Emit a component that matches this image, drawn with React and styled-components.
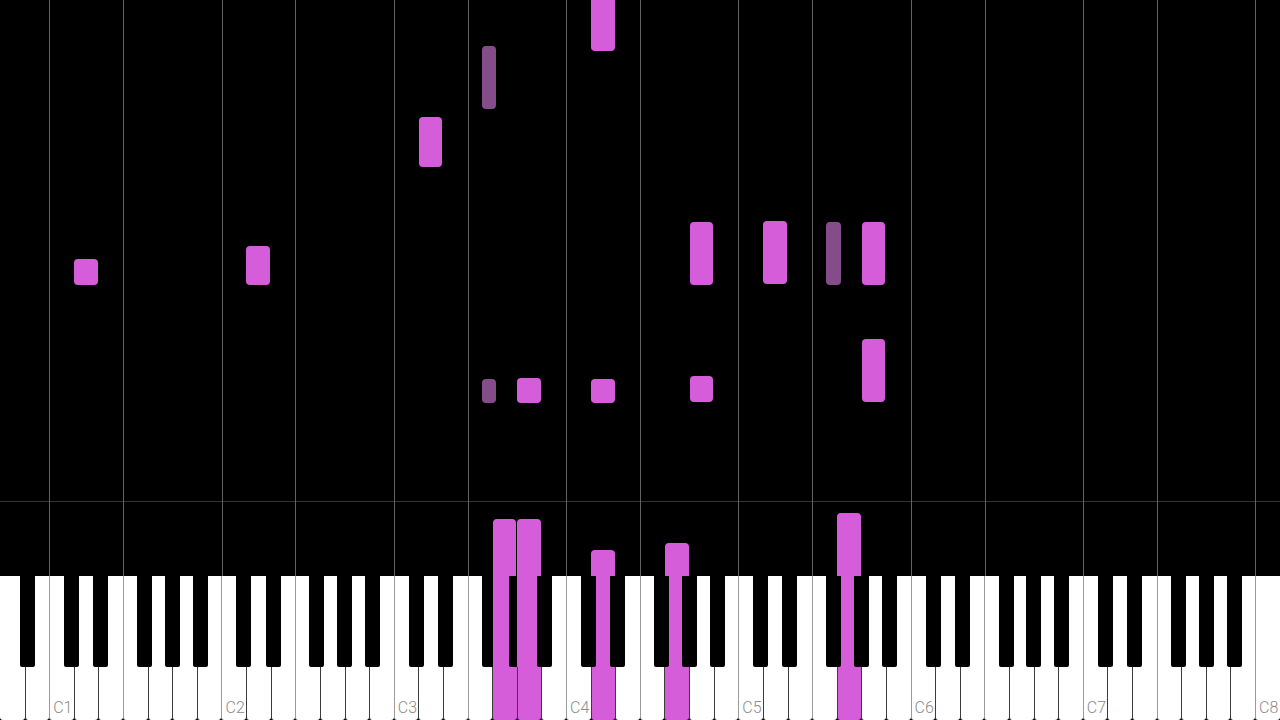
import React from 'react';
import styled, { createGlobalStyle } from 'styled-components';

// Keyboard geometry: a full 88-key piano, A0..C8, 52 naturals across the stage.
const STAGE_W = 1280;
const WHITE_COUNT = 52;
const WHITE_W = STAGE_W / WHITE_COUNT;
const OCTAVE_W = WHITE_W * 7;
const BLACK_W = 15;
const BLACK_H = 91;
const KEYBOARD_H = 144;
const BAR_LINE_Y = 501;

const NATURAL_STEP = { C: 0, D: 1, E: 2, F: 3, G: 4, A: 5, B: 6 };
// Left edge of each sharp inside an octave, measured on a 172.3px octave.
const SHARP_OFFSET = { C: 14.8, D: 44.0, F: 87.8, G: 115.6, A: 143.5 };
const NEXT_SHARP = { C: 'C', D: 'D', E: 'F', F: 'F', G: 'G', A: 'A', B: 'C' };

const NOTE = '#d65dda';
const NOTE_DIM = '#844d89';

const octaveLeft = (oct) => (2 + 7 * (oct - 1)) * WHITE_W;

function keySpan(name) {
  const [, letter, sharp, o] = name.match(/^([A-G])(#?)(\d)$/);
  const oct = Number(o);
  if (sharp) {
    return {
      left: octaveLeft(oct) + (SHARP_OFFSET[letter] * OCTAVE_W) / 172.31,
      width: BLACK_W,
      sharp: true,
    };
  }
  return { left: octaveLeft(oct) + NATURAL_STEP[letter] * WHITE_W, width: WHITE_W, sharp: false };
}

const WHITE_KEYS = Array.from({ length: WHITE_COUNT }, (_, i) => {
  const letter = 'CDEFGAB'[(i + 5) % 7];
  const octave = i < 2 ? 0 : Math.floor((i - 2) / 7) + 1;
  return { letter, octave, name: `${letter}${octave}`, index: i };
});

const BLACK_KEYS = [];
for (let oct = 0; oct <= 7; oct += 1) {
  ['C', 'D', 'F', 'G', 'A'].forEach((l) => {
    const span = keySpan(`${l}#${oct}`);
    if (span.left >= 0 && span.left + BLACK_W <= STAGE_W) BLACK_KEYS.push({ name: `${l}#${oct}`, left: span.left });
  });
}

// Grid bands between the C and F lines, in naturals.
const GRID_BANDS = [2, ...Array.from({ length: 7 }, () => [3, 4]).flat(), 1];

// Falling notes: key, top and bottom on the roll (px).
const FALLING = [
  { key: 'D4', top: -12, bottom: 51.3 },
  { key: 'F#3', top: 45.5, bottom: 108.7 },
  { key: 'D3', top: 116.7, bottom: 167 },
  { key: 'D5', top: 220.7, bottom: 284.3 },
  { key: 'A4', top: 221.7, bottom: 284.7 },
  { key: 'F#5', top: 221.7, bottom: 285 },
  { key: 'A5', top: 221.7, bottom: 285 },
  { key: 'D2', top: 246, bottom: 284.5 },
  { key: 'D1', top: 259, bottom: 284.5 },
  { key: 'A5', top: 339, bottom: 402.3 },
  { key: 'A4', top: 376, bottom: 402.3 },
  { key: 'A3', top: 378.3, bottom: 403 },
  { key: 'D4', top: 378.7, bottom: 403 },
  { key: 'F#3', top: 379, bottom: 402.7 },
];

// Notes currently sounding: they run down into the keys.
const SOUNDING = [
  { key: 'G5', top: 512.7 },
  { key: 'G3', top: 519 },
  { key: 'A3', top: 519 },
  { key: 'G4', top: 543 },
  { key: 'D4', top: 550 },
];
const PRESSED = new Set(SOUNDING.map((n) => n.key));
// Freshly struck keys whose bar still crosses the sharp on their left.
const STRUCK = ['G3', 'A3'];

const GlobalStyle = createGlobalStyle`
  html, body {
    margin: 0;
    padding: 0;
    background: #000;
    overflow: hidden;
  }
  #root {
    width: ${STAGE_W}px;
    height: 720px;
  }
`;

const Stage = styled.div`
  width: ${STAGE_W}px;
  height: 720px;
  display: flex;
  flex-direction: column;
  background: #000;
  font-family: Roboto, 'Liberation Sans', sans-serif;
`;

// The roll: C/F grid bands laid out in a row, with the measure line painted behind them.
const Roll = styled.div`
  position: relative;
  flex: 1 1 auto;
  display: flex;
  overflow: hidden;
  background: linear-gradient(#343434, #343434) 0 ${BAR_LINE_Y}px / 100% 1px no-repeat, #000;
`;

const GridBand = styled.div`
  flex: 0 0 ${(p) => (p.$span * 100) / WHITE_COUNT}%;
  box-sizing: border-box;
  border-left: ${(p) => (p.$first ? 'none' : '1px solid #626262')};
`;

const NoteBar = styled.div`
  position: absolute;
  left: ${(p) => p.$left}px;
  top: ${(p) => p.$top}px;
  width: ${(p) => p.$width}px;
  height: ${(p) => p.$height}px;
  background: ${(p) => (p.$dim ? NOTE_DIM : NOTE)};
  border-radius: ${(p) => (p.$sounding ? '4px 4px 0 0' : '4px')};
`;

const Keyboard = styled.div`
  position: relative;
  flex: 0 0 ${KEYBOARD_H}px;
  display: flex;
  background: #000;
`;

const WhiteKey = styled.div`
  flex: 0 0 ${100 / WHITE_COUNT}%;
  box-sizing: border-box;
  display: flex;
  align-items: flex-end;
  padding: 0 0 4px 3px;
  background: ${(p) => (p.$pressed ? NOTE : '#fff')};
  border-left: ${(p) => (p.$edge === 'none' ? 'none' : `1px solid ${p.$edge === 'grid' ? '#9a9a9a' : '#3c3c3c'}`)};
  border-radius: 0 0 3px 3px;
`;

const KeyLabel = styled.span`
  font-family: Roboto, 'Liberation Sans', sans-serif;
  font-weight: 300;
  font-size: 16px;
  line-height: 16px;
  color: #8c8c8c;
`;

const BlackKey = styled.div`
  position: absolute;
  top: 0;
  left: ${(p) => p.$left}px;
  width: ${BLACK_W}px;
  height: ${BLACK_H}px;
  background: #000;
  border-radius: 0 0 2px 2px;
  z-index: 1;
`;

const StrikeGlow = styled.div`
  position: absolute;
  top: 0;
  left: ${(p) => p.$left}px;
  width: ${(p) => p.$width}px;
  height: ${BLACK_H}px;
  background: ${NOTE};
  z-index: 2;
`;

function edgeFor(key) {
  if (key.index === 0) return 'none';
  return key.letter === 'C' || key.letter === 'F' ? 'grid' : 'seam';
}

function naturalNote(span) {
  return { left: span.left + 0.3, width: WHITE_W - 1 };
}

export default function App() {
  const rollH = 720 - KEYBOARD_H;

  return (
    <>
      <GlobalStyle />
      <Stage>
        <Roll>
          {GRID_BANDS.map((span, i) => (
            <GridBand key={i} $span={span} $first={i === 0} />
          ))}
          {FALLING.map((n, i) => {
            const span = keySpan(n.key);
            const box = span.sharp ? { left: span.left, width: 14.5 } : naturalNote(span);
            return (
              <NoteBar
                key={`f${i}`}
                $left={box.left}
                $width={box.width}
                $top={n.top}
                $height={n.bottom - n.top}
                $dim={span.sharp}
              />
            );
          })}
          {SOUNDING.map((n) => {
            const box = naturalNote(keySpan(n.key));
            return (
              <NoteBar
                key={`s${n.key}`}
                $sounding
                $left={box.left}
                $width={box.width}
                $top={n.top}
                $height={rollH - n.top}
              />
            );
          })}
        </Roll>
        <Keyboard>
          {WHITE_KEYS.map((k) => (
            <WhiteKey key={k.name} $pressed={PRESSED.has(k.name)} $edge={edgeFor(k)}>
              {k.letter === 'C' && <KeyLabel>{k.name}</KeyLabel>}
            </WhiteKey>
          ))}
          {BLACK_KEYS.map((b) => (
            <BlackKey key={b.name} $left={b.left} />
          ))}
          {STRUCK.map((name) => {
            const span = keySpan(name);
            const letter = name[0];
            const oct = Number(name.slice(1));
            const nextOct = letter === 'B' ? oct + 1 : oct;
            const right = keySpan(`${NEXT_SHARP[letter]}#${nextOct}`).left;
            const left = span.left + 0.3;
            return <StrikeGlow key={`g${name}`} $left={left} $width={right - left} />;
          })}
        </Keyboard>
      </Stage>
    </>
  );
}
